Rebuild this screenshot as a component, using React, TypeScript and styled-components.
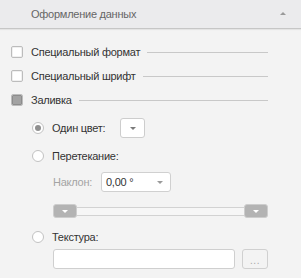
import React from "react";
import styled, { createGlobalStyle } from "styled-components";

const Global = createGlobalStyle`
  html, body { margin: 0; padding: 0; background: #f3f3f3; }
  body { font-family: "Liberation Sans", Arial, sans-serif; font-size: 11px; letter-spacing: -0.25px; color: #333; }
  * { box-sizing: border-box; }
`;

const Panel = styled.div`
  width: 301px;
  height: 278px;
  background: #f3f3f3;
  display: flex;
  flex-direction: column;
`;

const Header = styled.div`
  height: 29px;
  flex: none;
  background: #ebebed;
  border-bottom: 1px solid #c6c6c6;
  box-shadow: 0 1px 1px rgba(0, 0, 0, 0.06);
  display: flex;
  align-items: center;
  padding: 0 15px 0 31px;
  color: #666;
  font-size: 11px;
`;

const HeaderTitle = styled.span`
  flex: 1;
`;

const UpCaret = styled.span`
  width: 0;
  height: 0;
  border-left: 3px solid transparent;
  border-right: 3px solid transparent;
  border-bottom: 3px solid #9a9a9a;
  margin-top: -2px;
`;

const Body = styled.div`
  display: flex;
  flex-direction: column;
  padding: 11px 33px 0 11px;
`;

const CheckRow = styled.div`
  height: 24px;
  display: flex;
  align-items: center;
`;

const Box = styled.span<{ $filled?: boolean }>`
  width: 12px;
  height: 12px;
  flex: none;
  border: 1px solid #bcbcbc;
  border-radius: 2px;
  background: #fff;
  box-shadow: inset 0 0 0 1px #f0f0f0;
  display: flex;
  align-items: center;
  justify-content: center;
  &::after {
    content: "";
    display: ${(p) => (p.$filled ? "block" : "none")};
    width: 8px;
    height: 8px;
    border-radius: 1px;
    background: #a2a2a2;
    border: 1px solid #8c8c8c;
  }
`;

const Label = styled.span`
  margin-left: 8px;
  white-space: nowrap;
  color: #333;
`;

const Rule = styled.span`
  flex: 1;
  height: 1px;
  background: #c8c8c8;
  margin-left: 7px;
`;

const Sub = styled.div`
  display: flex;
  flex-direction: column;
  padding-left: 21px;
`;

const RadioRow = styled.div<{ $top: number }>`
  height: 20px;
  margin-top: ${(p) => p.$top}px;
  display: flex;
  align-items: center;
`;

const Radio = styled.span<{ $on?: boolean }>`
  width: 12px;
  height: 12px;
  flex: none;
  border-radius: 50%;
  border: 1px solid #c2c2c2;
  background: #fff;
  display: flex;
  align-items: center;
  justify-content: center;
  &::after {
    content: "";
    display: ${(p) => (p.$on ? "block" : "none")};
    width: 6px;
    height: 6px;
    border-radius: 50%;
    background: #8f8f8f;
  }
`;

const ColorButton = styled.span`
  width: 25px;
  height: 20px;
  margin-left: 15px;
  border: 1px solid #cdcdcd;
  border-radius: 3px;
  background: #fff;
  display: flex;
  align-items: center;
  justify-content: center;
`;

const DownCaret = styled.span<{ $color?: string }>`
  width: 0;
  height: 0;
  border-left: 3px solid transparent;
  border-right: 3px solid transparent;
  border-top: 3px solid ${(p) => p.$color || "#7a7a7a"};
`;

const Inner = styled.div`
  display: flex;
  flex-direction: column;
  padding-left: 21px;
`;

const FieldRow = styled.div<{ $top: number }>`
  height: 20px;
  margin-top: ${(p) => p.$top}px;
  display: flex;
  align-items: center;
`;

const MutedLabel = styled.span`
  color: #a4a4a4;
  width: 48px;
  flex: none;
`;

const Combo = styled.div`
  width: 70px;
  height: 20px;
  border: 1px solid #d0d0d0;
  border-radius: 3px;
  background: #fff;
  display: flex;
  align-items: center;
  padding: 0 7px 0 4px;
  color: #333;
`;

const ComboText = styled.span`
  flex: 1;
`;

const Slider = styled.div`
  height: 14px;
  margin-top: 12px;
  display: flex;
  align-items: center;
`;

const Thumb = styled.span`
  width: 24px;
  height: 14px;
  flex: none;
  border: 1px solid #cdcdcd;
  border-radius: 3px;
  background: #b3b3b3;
  display: flex;
  align-items: center;
  justify-content: center;
`;

const Track = styled.span`
  flex: 1;
  height: 9px;
  border-top: 1px solid #d2d2d2;
  border-bottom: 1px solid #d2d2d2;
  background: #f6f6f6;
`;

const TextInput = styled.div`
  flex: 1;
  height: 20px;
  border: 1px solid #cfcfcf;
  border-radius: 3px;
  background: #fff;
`;

const DotsButton = styled.span`
  width: 26px;
  height: 20px;
  flex: none;
  margin-left: 7px;
  border: 1px solid #d0d0d0;
  border-radius: 3px;
  display: flex;
  align-items: center;
  justify-content: center;
  color: #a8a8a8;
  font-size: 10px;
  letter-spacing: 0.5px;
  padding-top: 2px;
`;

export default function App() {
  return (
    <>
      <Global />
      <Panel>
        <Header>
          <HeaderTitle>Оформление данных</HeaderTitle>
          <UpCaret />
        </Header>
        <Body>
          <CheckRow>
            <Box />
            <Label>Специальный формат</Label>
            <Rule />
          </CheckRow>
          <CheckRow>
            <Box />
            <Label>Специальный шрифт</Label>
            <Rule />
          </CheckRow>
          <CheckRow>
            <Box $filled />
            <Label>Заливка</Label>
            <Rule />
          </CheckRow>
          <Sub>
            <RadioRow $top={6}>
              <Radio $on />
              <Label>Один цвет:</Label>
              <ColorButton>
                <DownCaret />
              </ColorButton>
            </RadioRow>
            <RadioRow $top={8}>
              <Radio />
              <Label>Перетекание:</Label>
            </RadioRow>
            <Inner>
              <FieldRow $top={6}>
                <MutedLabel>Наклон:</MutedLabel>
                <Combo>
                  <ComboText>0,00 °</ComboText>
                  <DownCaret $color="#9a9a9a" />
                </Combo>
              </FieldRow>
              <Slider>
                <Thumb>
                  <DownCaret $color="#fff" />
                </Thumb>
                <Track />
                <Thumb>
                  <DownCaret $color="#fff" />
                </Thumb>
              </Slider>
            </Inner>
            <RadioRow $top={9}>
              <Radio />
              <Label>Текстура:</Label>
            </RadioRow>
            <Inner>
              <FieldRow $top={2}>
                <TextInput />
                <DotsButton>...</DotsButton>
              </FieldRow>
            </Inner>
          </Sub>
        </Body>
      </Panel>
    </>
  );
}
